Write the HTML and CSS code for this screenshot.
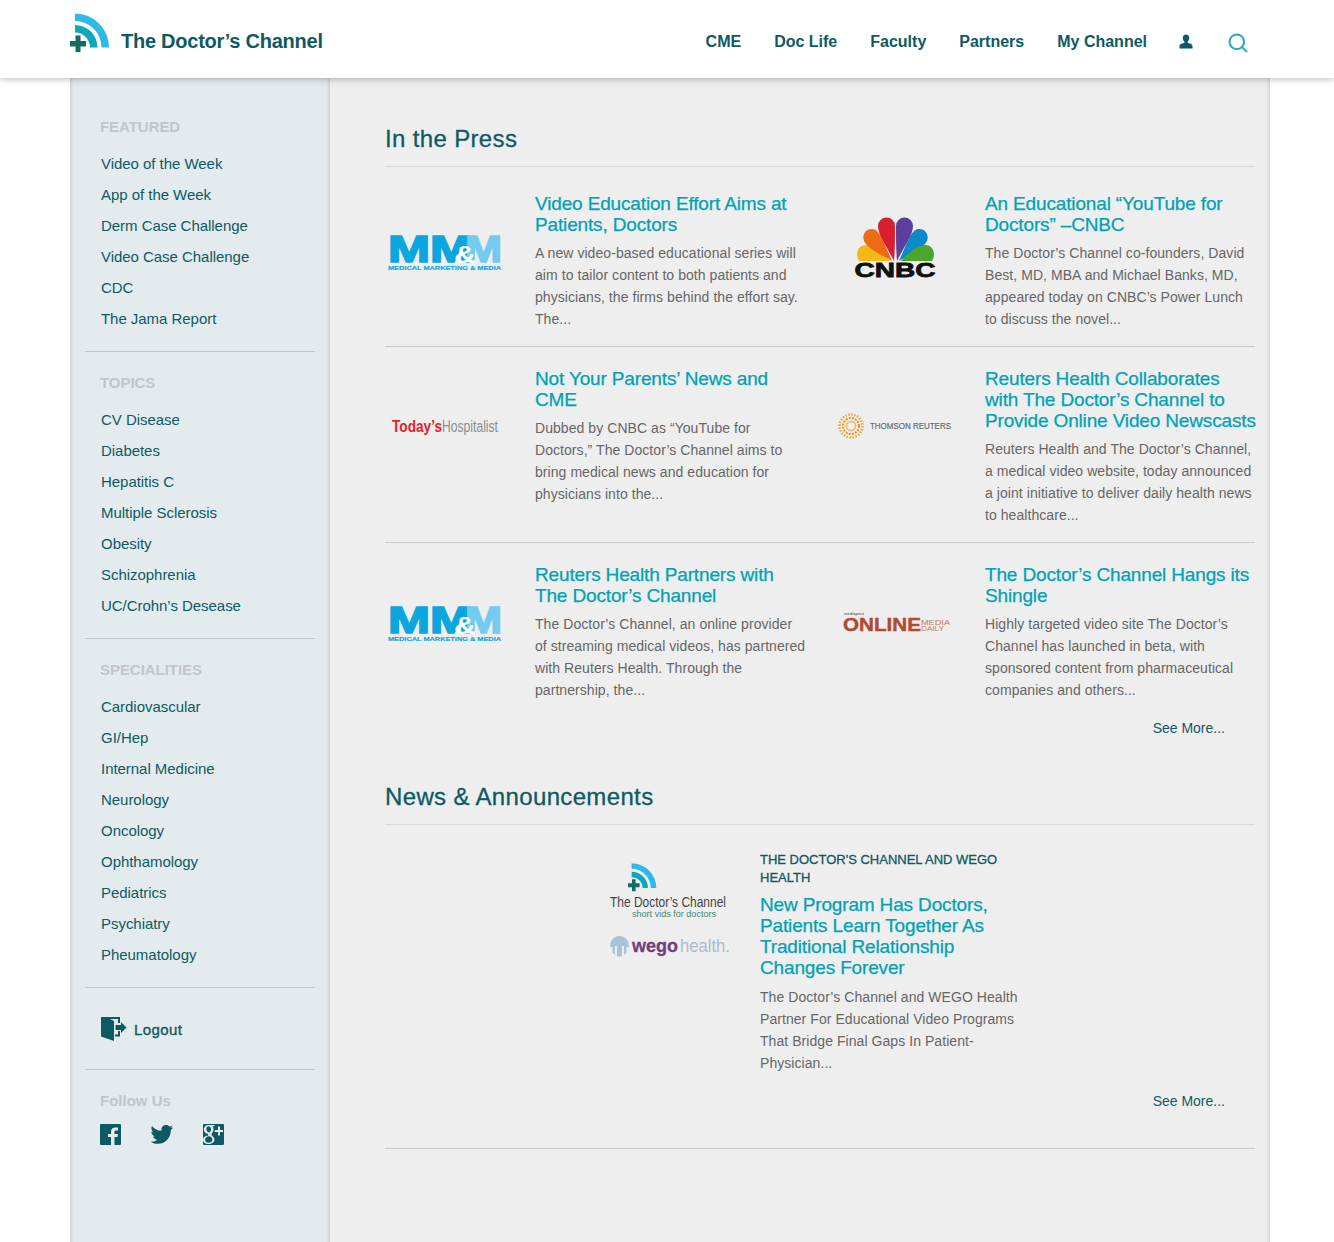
FILE: index.html
```html
<!DOCTYPE html>
<html lang="en">
<head>
<meta charset="utf-8">
<title>The Doctor's Channel</title>
<link rel="stylesheet" href="styles.css">
</head>
<body>
<svg class="defs" width="0" height="0" aria-hidden="true">
  <symbol id="tdc" viewBox="0 0 40 40">
    <path class="arc-o" d="M5 0.500A34 34 0 0 1 39 34.500H31.500A26.500 26.500 0 0 0 5 8Z"/>
    <path class="arc-i" d="M5 12A22.500 22.500 0 0 1 27.500 34.500H20A15 15 0 0 0 5 19.500Z"/>
    <path class="cross" d="M5.500 22.500H10.500V28H16V33.500H10.500V39H5.500V33.500H0V28H5.500Z"/>
  </symbol>
  <symbol id="mmm" viewBox="0 0 120 40">
    <text class="mm-a" x="3" y="30" textLength="84" lengthAdjust="spacingAndGlyphs">MM</text>
    <text class="mm-b" x="80" y="30" textLength="37" lengthAdjust="spacingAndGlyphs">M</text>
    <text class="mm-c" x="69" y="31" textLength="22" lengthAdjust="spacingAndGlyphs">&amp;</text>
    <text class="mm-d" x="3" y="37.500" textLength="113" lengthAdjust="spacingAndGlyphs">MEDICAL MARKETING &amp; MEDIA</text>
  </symbol>
</svg>
<header class="top">
  <a class="brand" href="#">
    <svg class="brand-mark" width="40" height="40"><use href="#tdc"/></svg>
    <span class="brand-name">The Doctor’s Channel</span>
  </a>
  <nav class="nav">
    <a href="#">CME</a>
    <a href="#">Doc Life</a>
    <a href="#">Faculty</a>
    <a href="#">Partners</a>
    <a href="#">My Channel</a>
    <a class="nav-user" href="#" aria-label="Account">
      <svg width="14" height="15" viewBox="0 0 14 15"><path class="dark" d="M7 0.500C9 0.500 10.200 2 10.200 4 10.200 5.800 9.300 7.200 8.500 7.800V8.800C10.500 9.400 13.500 10 13.500 12V14.500H0.500V12C0.500 10 3.500 9.400 5.500 8.800V7.800C4.700 7.200 3.800 5.800 3.800 4 3.800 2 5 0.500 7 0.500Z"/></svg>
    </a>
    <a class="nav-search" href="#" aria-label="Search">
      <svg width="20" height="20" viewBox="0 0 20 20"><circle class="search" cx="8.800" cy="8.800" r="7.300"/><path class="search" d="M14 14L19 19"/></svg>
    </a>
  </nav>
</header>
<div class="wrap">
  <aside class="side">
    <section class="side-sec">
      <h3>FEATURED</h3>
      <ul>
        <li><a href="#">Video of the Week</a></li>
        <li><a href="#">App of the Week</a></li>
        <li><a href="#">Derm Case Challenge</a></li>
        <li><a href="#">Video Case Challenge</a></li>
        <li><a href="#">CDC</a></li>
        <li><a href="#">The Jama Report</a></li>
      </ul>
    </section>
    <section class="side-sec">
      <h3>TOPICS</h3>
      <ul>
        <li><a href="#">CV Disease</a></li>
        <li><a href="#">Diabetes</a></li>
        <li><a href="#">Hepatitis C</a></li>
        <li><a href="#">Multiple Sclerosis</a></li>
        <li><a href="#">Obesity</a></li>
        <li><a href="#">Schizophrenia</a></li>
        <li><a href="#">UC/Crohn’s Desease</a></li>
      </ul>
    </section>
    <section class="side-sec">
      <h3>SPECIALITIES</h3>
      <ul>
        <li><a href="#">Cardiovascular</a></li>
        <li><a href="#">GI/Hep</a></li>
        <li><a href="#">Internal Medicine</a></li>
        <li><a href="#">Neurology</a></li>
        <li><a href="#">Oncology</a></li>
        <li><a href="#">Ophthamology</a></li>
        <li><a href="#">Pediatrics</a></li>
        <li><a href="#">Psychiatry</a></li>
        <li><a href="#">Pheumatology</a></li>
      </ul>
    </section>
    <section class="side-logout">
      <a class="logout" href="#">
        <svg width="26" height="25" viewBox="0 0 26 25"><path class="dark" d="M0 0H19V6H17V2H9L13 4V24L0 19.500Z"/><path class="dark" d="M17 14H19V19.500H14V17.500H17Z"/><path class="dark" d="M14.500 8H20V5L25.500 10.500 20 16V13H14.500Z"/></svg>
        <span>Logout</span>
      </a>
    </section>
    <section class="side-follow">
      <h4>Follow Us</h4>
      <div class="social">
        <svg width="21" height="21" viewBox="0 0 21 21"><path class="dark" d="M1 0H20Q21 0 21 1V20Q21 21 20 21H14.500V13H17.500L18 10H14.500V8C14.500 7 15 6.500 16 6.500H18V3.500H15.300C12.800 3.500 11 5 11 7.800V10H8V13H11V21H1Q0 21 0 20V1Q0 0 1 0Z"/></svg>
        <svg width="22" height="19" viewBox="0 0 22 19"><path class="dark" d="M22 2.300C21.200 2.700 20.300 2.900 19.400 3 20.300 2.400 21 1.600 21.400 0.500 20.500 1 19.600 1.400 18.600 1.600 17.700 0.600 16.500 0 15.100 0 12.500 0 10.400 2.100 10.400 4.700 10.400 5.100 10.500 5.400 10.500 5.800 6.600 5.600 3.200 3.700 1 0.900 0.600 1.600 0.400 2.400 0.400 3.300 0.400 4.900 1.200 6.300 2.500 7.200 1.700 7.200 1 7 0.400 6.600V6.700C0.400 9 2 10.900 4.100 11.300 3.700 11.400 3.300 11.500 2.900 11.500 2.600 11.500 2.300 11.500 2 11.400 2.600 13.300 4.300 14.600 6.400 14.700 4.800 15.900 2.800 16.700 0.600 16.700 0.200 16.700-0.200 16.700-0.500 16.600 1.600 18 4.100 18.800 6.900 18.800 15.200 18.800 19.800 11.800 19.800 5.700V5.100C20.700 4.500 21.400 3.500 22 2.300Z"/></svg>
        <svg width="21" height="21" viewBox="0 0 21 21"><path class="dark" fill-rule="evenodd" d="M1 0H20Q21 0 21 1V20Q21 21 20 21H1Q0 21 0 20V1Q0 0 1 0ZM15 2.500V6H11.800V8H15V11.500H17V8H20V6H17V2.500ZM5.500 1C3 1 0.800 2.800 0.800 5.500 0.800 8 2.800 9.800 5 9.800L5.300 11.500C3 11.800 0 12.800 0 15.700 0 18.600 3 20 5.500 20 9 20 11.500 18 11.500 15.500 11.500 12.700 8.500 11.800 8.500 10.400 8.500 9.200 10.500 8.500 10.500 5.500 10.500 4 10 2.900 9.300 2.200H11.500V1ZM5.600 2.300C7 2.300 8 3.900 8 5.700 8 7.200 7.200 8.300 6 8.300 4.400 8.300 3.300 6.500 3.300 4.800 3.300 3.300 4.200 2.300 5.600 2.300ZM5.900 12.300C7.800 12.300 9.300 13.800 9.300 15.800 9.300 17.600 7.800 18.700 5.700 18.700 3.500 18.700 2.100 17.500 2.100 15.700 2.100 13.800 3.800 12.300 5.900 12.300Z"/></svg>
      </div>
    </section>
  </aside>
  <main class="main">
    <section class="block">
      <h2>In the Press</h2>
      <div class="press-row press-first">
        <article class="press">
          <div class="logo logo-mm"><svg width="120" height="40"><use href="#mmm"/></svg></div>
          <div class="body">
            <h4><a href="#">Video Education Effort Aims at Patients, Doctors</a></h4>
            <p>A new video-based educational series will aim to tailor content to both patients and physicians, the firms behind the effort say. The...</p>
          </div>
        </article>
        <article class="press">
          <div class="logo logo-cnbc">
            <svg width="120" height="66" viewBox="0 0 120 66">
              <path class="f-y" d="M55 47H24C20 41 22 31 31 31 39 31 49 40 55 47Z"/>
              <path class="f-o" d="M57 47C47 41 30 34 28.500 25 27 17 36 12 42 17 47 22 52 36 57 47Z"/>
              <path class="f-r" d="M59 47C53 34 43 22 43 12A8.500 8.500 0 0 1 60 12C60 24 60 36 59 47Z"/>
              <path class="f-p" d="M62 47C68 34 78 22 78 12A8.500 8.500 0 0 0 61 12C61 24 61 36 62 47Z"/>
              <path class="f-b" d="M64 47C74 41 91 34 92.500 25 94 17 85 12 79 17 74 22 69 36 64 47Z"/>
              <path class="f-g" d="M66 47H97C101 41 99 31 90 31 82 31 72 40 66 47Z"/>
              <text class="cnbc" x="19.500" y="63" textLength="81" lengthAdjust="spacingAndGlyphs">CNBC</text>
            </svg>
          </div>
          <div class="body">
            <h4><a href="#">An Educational “YouTube for Doctors” –CNBC</a></h4>
            <p>The Doctor’s Channel co-founders, David Best, MD, MBA and Michael Banks, MD, appeared today on CNBC’s Power Lunch to discuss the novel...</p>
          </div>
        </article>
      </div>
      <div class="press-row">
        <article class="press">
          <div class="logo logo-up">
            <svg width="120" height="24" viewBox="0 0 120 24">
              <text class="th-a" x="7" y="18" textLength="50" lengthAdjust="spacingAndGlyphs">Today’s</text>
              <text class="th-b" x="57" y="18" textLength="56" lengthAdjust="spacingAndGlyphs">Hospitalist</text>
            </svg>
          </div>
          <div class="body">
            <h4><a href="#">Not Your Parents’ News and CME</a></h4>
            <p>Dubbed by CNBC as “YouTube for Doctors,” The Doctor’s Channel aims to bring medical news and education for physicians into the...</p>
          </div>
        </article>
        <article class="press">
          <div class="logo logo-up">
            <svg width="120" height="30" viewBox="0 0 120 30">
              <circle class="tr1" cx="16" cy="15" r="11.500"/>
              <circle class="tr2" cx="16" cy="15" r="8"/>
              <circle class="tr3" cx="16" cy="15" r="4.500"/>
              <text class="tr-t" x="35" y="18" textLength="81" lengthAdjust="spacingAndGlyphs">THOMSON REUTERS</text>
            </svg>
          </div>
          <div class="body">
            <h4><a href="#">Reuters Health Collaborates<br>with The Doctor’s Channel to Provide Online Video Newscasts</a></h4>
            <p>Reuters Health and The Doctor’s Channel, a medical video website, today announced a joint initiative to deliver daily health news to healthcare...</p>
          </div>
        </article>
      </div>
      <div class="press-row press-last">
        <article class="press">
          <div class="logo logo-mm"><svg width="120" height="40"><use href="#mmm"/></svg></div>
          <div class="body">
            <h4><a href="#">Reuters Health Partners with The Doctor’s Channel</a></h4>
            <p>The Doctor’s Channel, an online provider of streaming medical videos, has partnered with Reuters Health. Through the partnership, the...</p>
          </div>
        </article>
        <article class="press">
          <div class="logo">
            <svg width="120" height="24" viewBox="0 0 120 24">
              <text class="om-s" x="9" y="6">mediapost</text>
              <text class="om-a" x="8" y="22" textLength="78" lengthAdjust="spacingAndGlyphs">ONLINE</text>
              <text class="om-b" x="86" y="15.500" textLength="29" lengthAdjust="spacingAndGlyphs">MEDIA</text>
              <text class="om-b" x="86" y="22" textLength="23" lengthAdjust="spacingAndGlyphs">DAILY</text>
            </svg>
          </div>
          <div class="body">
            <h4><a href="#">The Doctor’s Channel Hangs its Shingle</a></h4>
            <p>Highly targeted video site The Doctor’s Channel has launched in beta, with sponsored content from pharmaceutical companies and others...</p>
          </div>
        </article>
      </div>
      <div class="more"><a href="#">See More...</a></div>
    </section>
    <section class="block block-news">
      <h2>News &amp; Announcements</h2>
      <article class="news">
        <div class="news-logo">
          <svg width="125" height="112" viewBox="0 0 125 112">
            <svg x="18" y="12" width="29" height="29"><use href="#tdc"/></svg>
            <text class="nl-a" x="0" y="56" textLength="116" lengthAdjust="spacingAndGlyphs">The Doctor’s Channel</text>
            <text class="nl-b" x="22" y="66" textLength="84" lengthAdjust="spacingAndGlyphs">short vids for doctors</text>
            <path class="wego-i" d="M0 96C0 89 4 85 9.500 85 15 85 19 89 19 96H16.500V102L14 104V95H12V105.500H7V95H5V104L2.500 102V96Z"/>
            <text class="wg-a" x="22" y="101" textLength="46" lengthAdjust="spacingAndGlyphs">wego</text>
            <text class="wg-b" x="70" y="101" textLength="50" lengthAdjust="spacingAndGlyphs">health.</text>
          </svg>
        </div>
        <div class="news-body">
          <h5>THE DOCTOR'S CHANNEL AND WEGO HEALTH</h5>
          <h4><a href="#">New Program Has Doctors, Patients Learn Together As Traditional Relationship Changes Forever</a></h4>
          <p>The Doctor’s Channel and WEGO Health Partner For Educational Video Programs That Bridge Final Gaps In Patient-Physician...</p>
        </div>
      </article>
      <div class="more more-news"><a href="#">See More...</a></div>
    </section>
  </main>
</div>
</body>
</html>
```
FILE: styles.css
```css
* { box-sizing: border-box; }
html, body { margin: 0; padding: 0; }
body { background: #fff; font-family: "Liberation Sans", Arial, sans-serif; color: #666; height: 1242px; overflow: hidden; }
a { color: inherit; text-decoration: none; }
ul { list-style: none; margin: 0; padding: 0; }
h2, h3, h4, h5, p { margin: 0; }
.defs { position: absolute; }
.dark { fill: #0e5a63; }
.search { fill: none; stroke: #2aa9bd; stroke-width: 2; }
.arc-o { fill: #2fb9e6; }
.arc-i { fill: #0fa8ba; }
.cross { fill: #146c5e; }

.top { position: relative; z-index: 2; height: 78px; background: #fff; box-shadow: 0 1px 7px rgba(0,0,0,.28); display: flex; align-items: flex-start; justify-content: space-between; padding-left: 70px; }
.brand { display: flex; align-items: flex-start; padding-top: 13px; }
.brand-mark { display: block; flex: none; }
.brand-name { margin: 16px 0 0 11px; font-size: 20px; line-height: 24px; font-weight: 700; color: #0e5a63; letter-spacing: -.25px; }
.nav { display: flex; align-items: flex-start; padding: 33px 86px 0 0; font-size: 16px; line-height: 18px; font-weight: 700; color: #0e5a63; }
.nav a { margin-left: 33px; }
.nav .nav-user { margin-left: 32px; padding-top: 1px; }
.nav-user svg, .nav-search svg { display: block; }
.nav .nav-search { margin-left: 35px; padding-top: 0; }

.wrap { width: 1200px; height: 1200px; margin-left: 70px; display: flex; }
.side { flex: none; width: 260px; background: #e4ebee; padding: 0 15px; box-shadow: inset 3px 0 3px -1px rgba(0,0,0,.1), inset -3px 0 3px -1px rgba(0,0,0,.1); }
.side-sec { border-bottom: 1px solid #c4c7c9; padding: 40px 0 17px; }
.side-sec + .side-sec { padding-top: 22px; }
.side h3 { font-size: 15px; line-height: 18px; font-weight: 700; color: #c2c6c8; padding-left: 15px; margin-bottom: 12px; letter-spacing: -.05px; }
.side li { font-size: 15px; line-height: 31px; color: #0e5a63; padding-left: 16px; letter-spacing: -.04px; }
.side-logout { border-bottom: 1px solid #c4c7c9; padding: 29px 0 27px 16px; height: 82px; }
.logout { display: flex; align-items: center; gap: 7px; font-size: 15px; font-weight: 400; line-height: 25px; color: #0e5a63; -webkit-text-stroke: .35px #0e5a63; letter-spacing: .4px; }
.logout svg { display: block; }
.side-follow { padding: 22px 0 0 15px; }
.side-follow h4 { font-size: 15px; line-height: 18px; font-weight: 700; color: #c2c6c8; }
.social { display: flex; align-items: center; gap: 30px; margin-top: 14px; }
.social svg { display: block; }

.main { flex: 1; background: #eee; padding: 0 15px 0 55px; box-shadow: inset -3px 0 3px -1px rgba(0,0,0,.1); }
.block h2 { font-size: 24px; line-height: 28px; font-weight: 400; color: #0e5a63; padding-top: 47px; padding-bottom: 13px; border-bottom: 1px solid #d5d6d6; -webkit-text-stroke: .3px #0e5a63; letter-spacing: .35px; }
.press-row { display: flex; border-bottom: 1px solid #c9caca; padding: 21px 0 16px; }
.press-first { padding-top: 26px; }
.press-last { border-bottom: 0; padding-bottom: 0; }
.press { display: flex; width: 450px; flex: none; }
.press + .press { width: 420px; }
.logo { flex: none; width: 120px; margin-right: 30px; display: flex; align-items: center; justify-content: center; padding-bottom: 24px; }
.logo svg { display: block; }
.logo-mm { padding-bottom: 20px; }
.logo-cnbc { padding-bottom: 30px; }
.logo-up { padding-bottom: 42px; }
.body { width: 270px; flex: none; }
.body h4 { margin-right: -4px; }
.body p { margin-right: -2px; }
.body h4, .news-body h4 { font-size: 19px; line-height: 21px; font-weight: 400; color: #00a2b5; -webkit-text-stroke: .25px #00a2b5; letter-spacing: -.15px; }
.body p, .news-body p { font-size: 14px; line-height: 22px; color: #666; margin-top: 7px; letter-spacing: .06px; }
.more { text-align: right; padding: 18px 30px 0 0; font-size: 14px; line-height: 18px; color: #0e5a63; }
.block-news h2 { padding-top: 46px; }
.news { display: flex; padding: 26px 0 0 225px; }
.news-logo { width: 150px; flex: none; }
.news-logo svg { display: block; }
.news-body { width: 260px; }
.news-body h5 { font-size: 13px; line-height: 18px; font-weight: 400; color: #0e5a63; -webkit-text-stroke: .3px #0e5a63; }
.news-body h4 { margin-top: 7px; }
.news-body p { margin-top: 8px; }
.more-news { padding-bottom: 38px; border-bottom: 1px solid #c9caca; }

.mm-a, .mm-b, .mm-c { font: 700 36px "Liberation Sans", sans-serif; }
.mm-a { fill: #0ba6dd; stroke: #0ba6dd; stroke-width: 1.600px; }
.mm-b { fill: #73ccf0; stroke: #73ccf0; stroke-width: 1.600px; }
.mm-c { fill: #fff; font-size: 24px; }
.mm-d { font: 700 6.200px "Liberation Sans", sans-serif; fill: #0ba6dd; stroke: #0ba6dd; stroke-width: .15px; }
.f-y { fill: #f4b919; } .f-o { fill: #ef6a14; } .f-r { fill: #d7202e; }
.f-p { fill: #5b3f9e; } .f-b { fill: #0b8acb; } .f-g { fill: #4ea52e; }
.cnbc { font: 700 20px "Liberation Sans", sans-serif; fill: #111; stroke: #111; stroke-width: .8px; }
.th-a { font: 700 17px "Liberation Sans", sans-serif; fill: #e3202b; }
.th-b { font: 400 16px "Liberation Sans", sans-serif; fill: #8d8d8d; }
.tr1 { fill: none; stroke: #f2a53c; stroke-width: 2.500px; stroke-dasharray: 1.500 1.500; }
.tr2 { fill: none; stroke: #ee8f1f; stroke-width: 2px; stroke-dasharray: 2 1.200; }
.tr3 { fill: none; stroke: #f4b45c; stroke-width: 1.500px; }
.tr-t { font: 400 8.500px "Liberation Sans", sans-serif; fill: #666; stroke: #666; stroke-width: .15px; }
.om-s { font: 700 4px "Liberation Sans", sans-serif; fill: #8a6a60; }
.om-a { font: 700 18px "Liberation Sans", sans-serif; fill: #b14a2e; stroke: #b14a2e; stroke-width: .4px; }
.om-b { font: 400 7.500px "Liberation Sans", sans-serif; fill: #c0795f; }
.nl-a { font: 400 14px "Liberation Sans", sans-serif; fill: #444; }
.nl-b { font: 400 9px "Liberation Sans", sans-serif; fill: #3d8b7c; }
.wego-i { fill: #a9c4d8; }
.wg-a { font: 700 19px "Liberation Sans", sans-serif; fill: #6f3f7f; stroke: #6f3f7f; stroke-width: .3px; }
.wg-b { font: 400 19px "Liberation Sans", sans-serif; fill: #a7bcd2; }
```
